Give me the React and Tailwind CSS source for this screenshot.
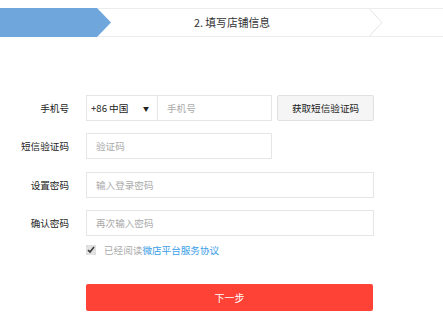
import React from 'react';

const font = { fontFamily: '"Noto Sans CJK SC", "Liberation Sans", sans-serif' };

function Row({ label, children, className = '' }) {
  return (
    <div className={`flex items-center ${className}`}>
      <label className="w-[70px] pr-[1px] text-right text-[9.6px] text-[#222]">{label}</label>
      <div className="ml-[16px] flex items-center">{children}</div>
    </div>
  );
}

export default function App() {
  return (
    <div className="w-[443px] h-[334px] bg-white overflow-hidden" style={font}>
      {/* steps */}
      <div className="mt-[8px] h-[29px] flex items-stretch border-y border-[#ececec] relative">
        <svg className="absolute left-0 top-[-1px]" width="112" height="29" viewBox="0 0 112 29">
          <polygon points="0,0 97,0 111,14.5 97,29 0,29" fill="#6fa6dc" />
        </svg>
        <div className="w-[111px] shrink-0" />
        <div className="flex-1 flex items-center justify-center text-[10.8px] text-[#333] pr-[16px]">2. 填写店铺信息</div>
        <svg className="shrink-0 mr-[60px]" width="14" height="27" viewBox="0 0 14 27">
          <polyline points="0.5,0 13,13.5 0.5,27" fill="none" stroke="#e4e4e4" strokeWidth="1" />
        </svg>
      </div>

      {/* form */}
      <div className="mt-[58px] flex flex-col">
        <Row label="手机号">
          <div className="h-[26px] w-[72px] border border-[#e6e6e6] flex items-center justify-between pl-[4px] pr-[8px] text-[9.6px] text-[#222]">
            <span>+86 中国</span>
            <span className="text-[6px]">▼</span>
          </div>
          <div className="h-[26px] w-[114px] border border-l-0 border-[#e6e6e6] flex items-center px-[9px] text-[9.6px] text-[#aaa]">手机号</div>
          <button className="ml-[5px] h-[26px] w-[97px] border border-[#e0e0e0] bg-[#f5f5f5] rounded-[2px] text-[9.6px] text-[#222]">获取短信验证码</button>
        </Row>
        <Row label="短信验证码" className="mt-[12px]">
          <div className="h-[26px] w-[186px] border border-[#e6e6e6] flex items-center px-[9px] text-[9.6px] text-[#aaa]">验证码</div>
        </Row>
        <Row label="设置密码" className="mt-[13px]">
          <div className="h-[26px] w-[288px] border border-[#e6e6e6] flex items-center px-[9px] text-[9.6px] text-[#aaa]">输入登录密码</div>
        </Row>
        <Row label="确认密码" className="mt-[12px]">
          <div className="h-[26px] w-[288px] border border-[#e6e6e6] flex items-center px-[9px] text-[9.6px] text-[#aaa]">再次输入密码</div>
        </Row>
        <div className="ml-[86px] mt-[7px] flex items-center text-[9.6px]">
          <input type="checkbox" defaultChecked className="w-[10px] h-[10px] m-0 accent-[#e2e2e2]" />
          <span className="ml-[8px] text-[#aaa]">已经阅读</span>
          <span className="text-[#3a9ee8]">微店平台服务协议</span>
        </div>
        <button className="ml-[86px] mt-[27px] w-[287px] h-[27px] bg-[#ff4236] rounded-[2px] text-white text-[10px]">下一步</button>
      </div>
    </div>
  );
}
